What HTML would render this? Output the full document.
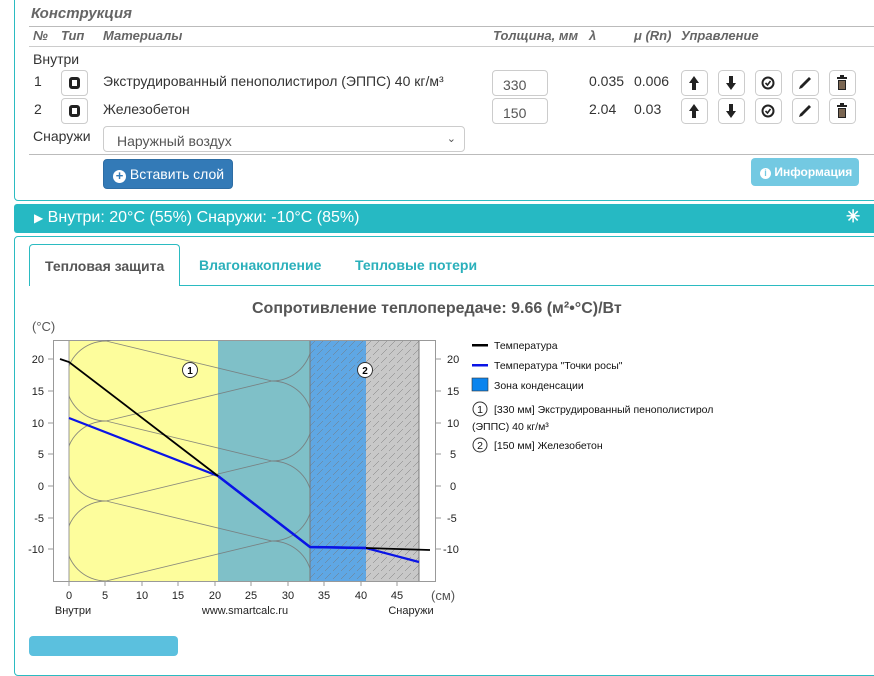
<!DOCTYPE html>
<html><head><meta charset="utf-8"><style>
*{box-sizing:border-box}
body{margin:0;width:874px;height:642px;overflow:hidden;background:#fff;font-family:"Liberation Sans",sans-serif;color:#333;position:relative}
.a{position:absolute;white-space:nowrap}
.hd{font-style:italic;font-weight:bold;color:#666;font-size:13px}
.t{font-size:14px;color:#333}
.btn{position:absolute;width:27px;height:26px;border:1px solid #ccc;border-radius:4px;background:#fff}
.inp{position:absolute;border:1px solid #ccc;border-radius:4px;font-size:14px;padding:6px 0 0 10px;color:#555}
.hr{position:absolute;height:1px;background:#ccc}
</style></head><body>
<div class="a" style="left:14px;top:-5px;width:880px;height:206px;border:1px solid #2bbbc1;border-radius:4px"></div>
<div class="a" style="left:31px;top:5px;font-size:15px;font-weight:bold;font-style:italic;color:#666">Конструкция</div>
<div class="hr" style="left:29px;top:26px;width:845px;background:#bbb"></div>
<div class="a hd" style="left:33px;top:28px">№</div>
<div class="a hd" style="left:61px;top:28px">Тип</div>
<div class="a hd" style="left:103px;top:28px">Материалы</div>
<div class="a hd" style="left:493px;top:28px">Толщина, мм</div>
<div class="a hd" style="left:589px;top:28px">λ</div>
<div class="a hd" style="left:634px;top:28px">μ (Rn)</div>
<div class="a hd" style="left:681px;top:28px">Управление</div>
<div class="hr" style="left:29px;top:46px;width:845px"></div>
<div class="a t" style="left:33px;top:51px">Внутри</div>
<div class="a t" style="left:34px;top:73px">1</div>
<div class="a t" style="left:34px;top:101px">2</div>
<div class="btn" style="left:61px;top:70px"><div class="a" style="left:7px;top:6px;width:11px;height:12px;border:3px solid #222;border-radius:3px"></div></div>
<div class="btn" style="left:61px;top:98px"><div class="a" style="left:7px;top:6px;width:11px;height:12px;border:3px solid #222;border-radius:3px"></div></div>
<div class="a t" style="left:103px;top:73px">Экструдированный пенополистирол (ЭППС) 40 кг/м³</div>
<div class="a t" style="left:103px;top:101px">Железобетон</div>
<div class="inp" style="left:492px;top:70px;width:56px;height:26px">330</div>
<div class="inp" style="left:492px;top:98px;width:56px;height:26px">150</div>
<div class="a t" style="left:589px;top:73px">0.035</div>
<div class="a t" style="left:634px;top:73px">0.006</div>
<div class="a t" style="left:589px;top:101px">2.04</div>
<div class="a t" style="left:634px;top:101px">0.03</div>
<svg class="a" style="left:0;top:0" width="874" height="130">
<defs>
<g id="up"><path d="M0,-7 L-5,0 L-2,0 L-2,7 L2,7 L2,0 L5,0Z" fill="#222"/></g>
<g id="dn"><path d="M0,7 L-5,0 L-2,0 L-2,-7 L2,-7 L2,0 L5,0Z" fill="#222"/></g>
<g id="ok"><circle r="5.5" fill="none" stroke="#222" stroke-width="2"/><path d="M-2.5,0 L-0.5,2 L2.5,-2" fill="none" stroke="#222" stroke-width="1.6"/></g>
<g id="pn"><path d="M4,-6 L6,-4 L-3,5 L-6,6 L-5,3Z" fill="#222"/></g>
<g id="tr"><rect x="-5" y="-6" width="10" height="2" fill="#222"/><rect x="-2" y="-8" width="4" height="2" fill="#222"/><rect x="-4" y="-3" width="8" height="10" fill="#222"/><path d="M-2,-2V6M0,-2V6M2,-2V6" stroke="#fc9" stroke-width="0.8"/></g>
</defs>
<g fill="#fff" stroke="#ccc"><rect x="681.5" y="70.5" width="26" height="25" rx="4"/><rect x="718.5" y="70.5" width="26" height="25" rx="4"/><rect x="755.5" y="70.5" width="26" height="25" rx="4"/><rect x="792.5" y="70.5" width="26" height="25" rx="4"/><rect x="829.5" y="70.5" width="26" height="25" rx="4"/>
<rect x="681.5" y="98.5" width="26" height="25" rx="4"/><rect x="718.5" y="98.5" width="26" height="25" rx="4"/><rect x="755.5" y="98.5" width="26" height="25" rx="4"/><rect x="792.5" y="98.5" width="26" height="25" rx="4"/><rect x="829.5" y="98.5" width="26" height="25" rx="4"/></g>
<use href="#up" x="694" y="83"/><use href="#dn" x="731" y="83"/><use href="#ok" x="768" y="83"/><use href="#pn" x="805" y="83"/><use href="#tr" x="842" y="83"/>
<use href="#up" x="694" y="111"/><use href="#dn" x="731" y="111"/><use href="#ok" x="768" y="111"/><use href="#pn" x="805" y="111"/><use href="#tr" x="842" y="111"/>
</svg>
<div class="a t" style="left:33px;top:128px">Снаружи</div>
<div class="inp" style="left:103px;top:126px;width:362px;height:26px;padding-left:13px">Наружный воздух<span style="position:absolute;right:8px;top:5px;font-size:11px">&#8964;</span></div>
<div class="hr" style="left:29px;top:154px;width:845px;background:#bbb"></div>
<div class="a" style="left:103px;top:159px;width:130px;height:30px;background:#337ab7;border:1px solid #2e6da4;border-radius:4px;color:#fff;font-size:14px;padding:6px 0 0 9px"><span style="display:inline-block;width:13px;height:13px;border-radius:50%;background:#fff;color:#337ab7;font-size:13px;line-height:12px;text-align:center;font-weight:bold;vertical-align:-1px">+</span> Вставить слой</div>
<div class="a" style="left:751px;top:158px;width:108px;height:28px;background:#5bc0de;border-radius:4px;color:#fff;font-size:12px;font-weight:bold;padding:7px 0 0 9px;opacity:.85"><span style="display:inline-block;width:11px;height:11px;border-radius:50%;background:#fff;color:#5bc0de;font-size:9px;line-height:11px;text-align:center">i</span> Информация</div>
<div class="a" style="left:14px;top:204px;width:880px;height:29px;background:#26b9c3;border-radius:3px;color:#fff;font-size:16px;padding:5px 0 0 20px"><span style="font-size:12px">&#9654;&#xFE0E;</span> Внутри: 20°C (55%) Снаружи: -10°C (85%)<span style="position:absolute;left:832px;top:3px;font-size:17px;font-weight:bold">&#10035;</span></div>
<div class="a" style="left:14px;top:236px;width:880px;height:440px;border:1px solid #2bbbc1;border-radius:4px"></div>
<div class="hr" style="left:29px;top:285px;width:845px;background:#2bbbc1"></div>
<div class="a" style="left:29px;top:244px;width:151px;height:42px;border:1px solid #2bbbc1;border-bottom:none;border-radius:4px 4px 0 0;background:#fff;font-size:14px;font-weight:bold;color:#555;padding:13px 0 0 15px">Тепловая защита</div>
<div class="a" style="left:199px;top:257px;font-size:14px;font-weight:bold;color:#2bb0bb">Влагонакопление</div>
<div class="a" style="left:355px;top:257px;font-size:14px;font-weight:bold;color:#2bb0bb">Тепловые потери</div>
<div class="a" style="left:252px;top:300px;font-size:16px;font-weight:bold;color:#555">Сопротивление теплопередаче: 9.66 (м²•°C)/Вт</div>
<svg class="a" style="left:0;top:310px" width="874" height="332" viewBox="0 310 874 332" font-family="Liberation Sans, sans-serif">
<defs>
<pattern id="h" width="8" height="8" patternUnits="userSpaceOnUse"><path d="M0,8 L3,5 M5,3 L8,0" stroke="#777" stroke-width="0.5"/></pattern>
<clipPath id="c"><rect x="69" y="340" width="241" height="241"/></clipPath>
</defs>
<text x="32" y="331" font-size="13" fill="#555">(°C)</text>
<rect x="53.5" y="340.5" width="382" height="241" fill="#fff" stroke="#999"/>
<rect x="69" y="341" width="149" height="240" fill="#fdfd9c"/>
<rect x="218" y="341" width="92" height="240" fill="#7fc0c8"/>
<rect x="310" y="341" width="56" height="240" fill="#5fa7e4"/>
<rect x="366" y="341" width="53" height="240" fill="#c8c8c8"/>
<rect x="310" y="341" width="109" height="240" fill="url(#h)"/>
<line x1="69" y1="341" x2="69" y2="581" stroke="#999"/>
<line x1="310" y1="341" x2="310" y2="581" stroke="#777"/>
<line x1="419" y1="341" x2="419" y2="581" stroke="#777"/>
<g clip-path="url(#c)" fill="none" stroke="#777" stroke-width="0.9" opacity="0.85">
<path d="M106,341 A40,40 0 0 0 106,421 A40,40 0 0 0 106,501 A40,40 0 0 0 106,581"/>
<path d="M272,301 A40,40 0 0 1 272,381 A40,40 0 0 1 272,461 A40,40 0 0 1 272,541 A40,40 0 0 1 272,621"/>
<path d="M106,341 L272,381 M106,421 L272,381 M106,421 L272,461 M106,501 L272,461 M106,501 L272,541 M106,581 L272,541 M106,341 L272,301 M106,581 L272,621"/>
</g>
<g font-size="11" fill="#222" text-anchor="end">
<text x="44" y="363">20</text><text x="44" y="395">15</text><text x="44" y="427">10</text><text x="44" y="458">5</text><text x="44" y="490">0</text><text x="44" y="522">-5</text><text x="44" y="553">-10</text>
</g>
<g font-size="11" fill="#222">
<text x="447" y="363">20</text><text x="447" y="395">15</text><text x="447" y="427">10</text><text x="450" y="458">5</text><text x="450" y="490">0</text><text x="447" y="522">-5</text><text x="443" y="553">-10</text>
</g>
<g stroke="#999"><path d="M48,359H53M48,391H53M48,423H53M48,454H53M48,486H53M48,518H53M48,549H53M436,359H441M436,391H441M436,423H441M436,454H441M436,486H441M436,518H441M436,549H441"/>
<path d="M69,581V586M105,581V586M142,581V586M178,581V586M215,581V586M251,581V586M288,581V586M324,581V586M361,581V586M397,581V586"/></g>
<g font-size="11" fill="#222" text-anchor="middle">
<text x="69" y="599">0</text><text x="105" y="599">5</text><text x="142" y="599">10</text><text x="178" y="599">15</text><text x="215" y="599">20</text><text x="251" y="599">25</text><text x="288" y="599">30</text><text x="324" y="599">35</text><text x="361" y="599">40</text><text x="397" y="599">45</text>
<text x="73" y="614" font-size="11">Внутри</text><text x="245" y="614">www.smartcalc.ru</text><text x="411" y="614">Снаружи</text>
</g>
<text x="431" y="600" font-size="13" fill="#555">(см)</text>
<path d="M69,418 L218,476 L310,547 L366,548 L419,562" fill="none" stroke="#0a14e6" stroke-width="2.2"/>
<path d="M60,359 L69,362 L218,476 L310,547 L366,548 L430,550" fill="none" stroke="#000" stroke-width="1.8"/>
<path d="M218,476 L310,547 L366,548" fill="none" stroke="#0a14e6" stroke-width="2.4"/>
<g font-size="10" font-weight="bold" text-anchor="middle"><circle cx="190" cy="370" r="7.5" fill="#fff" stroke="#333"/><text x="190" y="374">1</text>
<circle cx="365" cy="370" r="7.5" fill="#fff" stroke="#333"/><text x="365" y="374">2</text></g>
<g font-size="10.5" fill="#111">
<rect x="472" y="344" width="16" height="2.5" fill="#000"/><text x="494" y="349">Температура</text>
<rect x="472" y="364" width="16" height="2.5" fill="#0a14e6"/><text x="494" y="369">Температура "Точки росы"</text>
<rect x="472" y="378" width="16" height="13" fill="#0a84ee" stroke="#333" stroke-width="0.6"/><text x="494" y="389">Зона конденсации</text>
<circle cx="480" cy="409" r="7" fill="#fff" stroke="#333"/><text x="480" y="413" text-anchor="middle">1</text><text x="494" y="413">[330 мм] Экструдированный пенополистирол</text>
<text x="472" y="430">(ЭППС) 40 кг/м³</text>
<circle cx="480" cy="445" r="7" fill="#fff" stroke="#333"/><text x="480" y="449" text-anchor="middle">2</text><text x="494" y="449">[150 мм] Железобетон</text>
</g>
</svg>
<div class="a" style="left:29px;top:636px;width:149px;height:20px;background:#5bc0de;border-radius:4px"></div>
</body></html>
